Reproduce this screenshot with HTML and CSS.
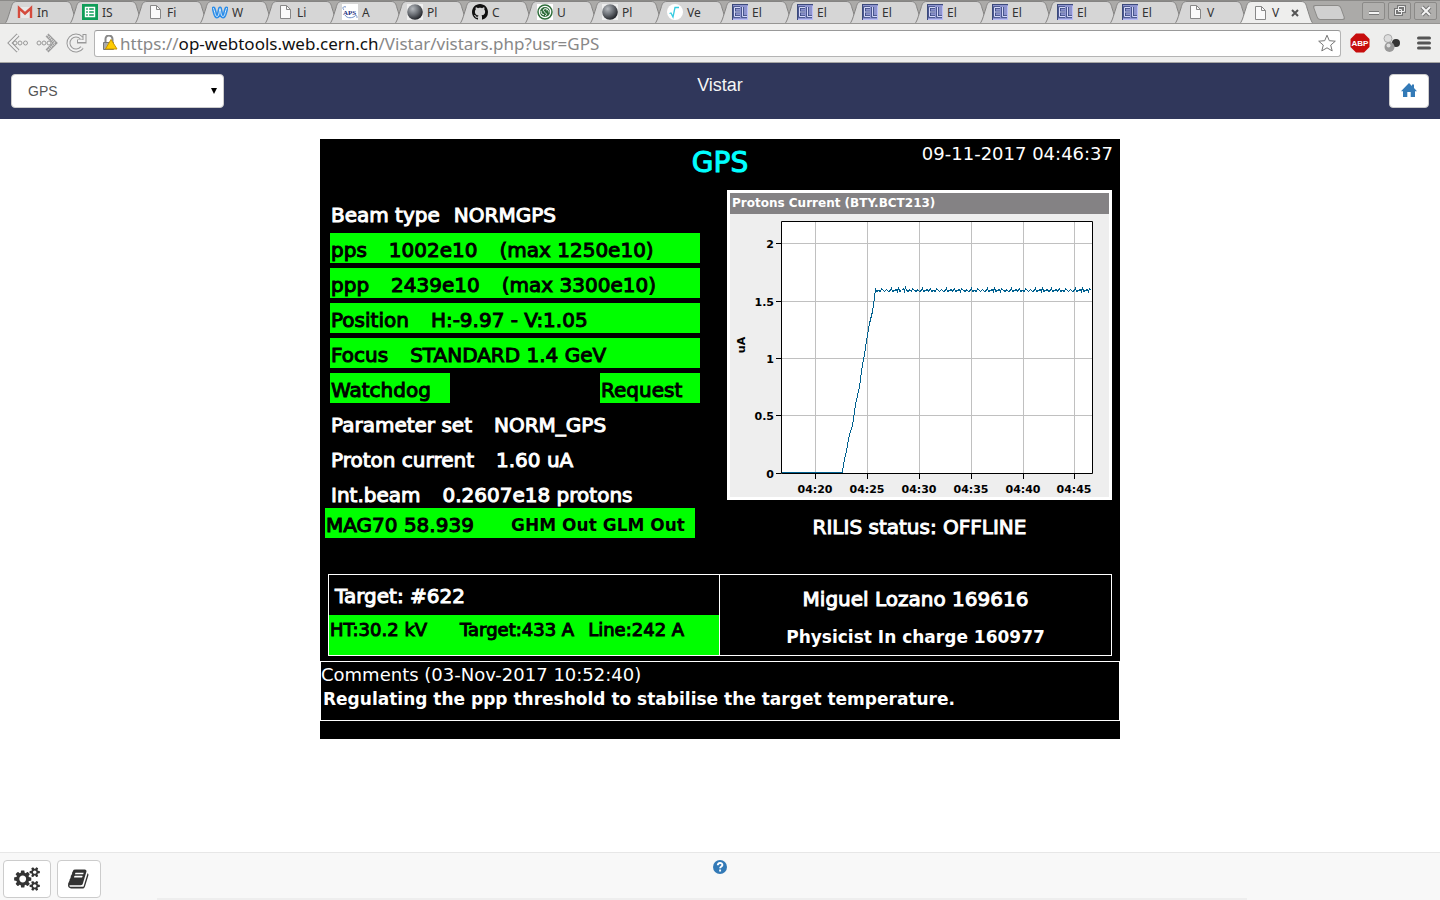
FILE: index.html
```html
<!DOCTYPE html>
<html lang="en">
<head>
    <meta charset="UTF-8">
    <meta name="viewport" content="width=device-width, initial-scale=1.0">
    <title>Vistar</title>
    <link rel="stylesheet" href="styles.css">
</head>
<body>
    <!-- shared icons -->
    <svg class="defs" aria-hidden="true">
        <symbol id="page" viewBox="0 0 16 16">
            <path d="M3.500 1.500h6l4 4v9h-10z" fill="#fafafa" stroke="#888"/>
            <path d="M9.500 1.500v4h4" fill="none" stroke="#888"/>
        </symbol>
        <symbol id="moon" viewBox="0 0 16 16">
            <radialGradient id="moonFill" cx="0.35" cy="0.3" r="0.75">
                <stop offset="0" stop-color="#b5b9be"/>
                <stop offset="0.500" stop-color="#6c7076"/>
                <stop offset="1" stop-color="#1d1f24"/>
            </radialGradient>
            <path d="M0 0h16v16H0z" fill="#eee"/>
            <circle cx="8" cy="8" r="7.800" fill="url(#moonFill)"/>
        </symbol>
        <symbol id="elog" viewBox="0 0 16 16">
            <path d="M0 0h16v16H0z" fill="#8e94cf"/>
            <path d="M0 16V0h16v1H1v15z" fill="#3c4a7c"/>
            <path d="M1 15h14V2h1v14H1z" fill="#b9bdf5"/>
            <path d="M8 3.500H2.500v9H8M2.500 8H8M10.500 3v9.500H15" fill="none" stroke="#39487f" stroke-width="2.600"/>
            <path d="M8 3.500H2.500v9H8M2.500 8H8M10.500 3v9.500H15" fill="none" stroke="#d5d8f8"/>
        </symbol>
    </svg>

    <nav class="tab-strip">
        <a class="tab" href="#"><svg viewBox="0 0 16 16"><path d="M1 3h14v11H1z" fill="#e8e8e8"/><path d="M2 14V4l6 5.500L14 4v10" fill="none" stroke="#d54b3d" stroke-width="2.400"/></svg><span>In</span></a>
        <a class="tab" href="#"><svg viewBox="0 0 16 16"><path d="M0 0h16v16H0z" fill="#0f9d58"/><path d="M3.500 3.500h9v9h-9zM3.500 6.500h9M3.500 9.500h9M6.500 3.500v9" fill="none" stroke="#fff" stroke-width="1.400"/></svg><span>IS</span></a>
        <a class="tab" href="#"><svg><use href="#page"/></svg><span>Fi</span></a>
        <a class="tab" href="#"><svg viewBox="0 0 16 16"><path d="M1.500 4.500c1.500 3 1.500 8 3.500 8s2-4 3-8c1 4 1 8 3 8s2-5 3.500-8" fill="none" stroke="#2e8ee8" stroke-width="4" stroke-linecap="round" stroke-linejoin="round"/><path d="M1.500 4.500c1.500 3 1.500 8 3.500 8s2-4 3-8c1 4 1 8 3 8s2-5 3.500-8" fill="none" stroke="#d8ebfb" stroke-linecap="round"/></svg><span>W</span></a>
        <a class="tab" href="#"><svg><use href="#page"/></svg><span>Li</span></a>
        <a class="tab" href="#"><svg viewBox="0 0 16 16"><path d="M0 0h16v16H0z" fill="#fff"/><path d="M4 3C1 2 0 4 2 6M3 11c2 4 8 3 10 1s2 1 2 2" fill="none" stroke="#7090c8"/><text x="1" y="11" class="aps">APS</text></svg><span>A</span></a>
        <a class="tab" href="#"><svg><use href="#moon"/></svg><span>Pl</span></a>
        <a class="tab" href="#"><svg viewBox="0 0 16 16"><path fill="#111" d="M8 0C3.580 0 0 3.580 0 8c0 3.540 2.290 6.530 5.470 7.590.4.070.55-.17.55-.38 0-.19-.01-.82-.01-1.490-2.010.37-2.530-.49-2.690-.94-.09-.23-.48-.94-.82-1.130-.28-.15-.68-.52-.01-.53.63-.01 1.080.58 1.230.82.72 1.210 1.870.87 2.330.66.07-.52.28-.87.51-1.070-1.780-.2-3.640-.89-3.640-3.950 0-.87.31-1.590.82-2.150-.08-.2-.36-1.020.08-2.120 0 0 .67-.21 2.200.82.64-.18 1.320-.27 2-.27s1.360.09 2 .27c1.530-1.040 2.200-.82 2.200-.82.44 1.100.16 1.920.08 2.120.51.56.82 1.270.82 2.150 0 3.070-1.870 3.750-3.650 3.950.29.25.54.73.54 1.480 0 1.070-.01 1.930-.01 2.200 0 .21.15.46.55.38A8 8 0 0 0 16 8c0-4.420-3.580-8-8-8z"/></svg><span>C</span></a>
        <a class="tab" href="#"><svg viewBox="0 0 16 16"><path d="M0 0h16v16H0z" fill="#fff"/><circle cx="8" cy="8" r="7" fill="#fff" stroke="#2f6e3b" stroke-width="1.500"/><circle cx="8" cy="8" r="5" fill="#2f6e3b"/><path d="M11 5.500C8 3.500 5 5.500 7 7.500s4 3 1 4.500M4 7c0 3 2 4 3 3.500M12 8.500c0-3-2-3-3-2.500" fill="none" stroke="#fff"/></svg><span>U</span></a>
        <a class="tab" href="#"><svg><use href="#moon"/></svg><span>Pl</span></a>
        <a class="tab" href="#"><svg viewBox="0 0 16 16"><circle cx="8" cy="8" r="8" fill="#fff"/><path d="M2.500 9.500L4 9l2 4 2-9.500h4" fill="none" stroke="#35cbe0" stroke-width="1.300"/></svg><span>Ve</span></a>
        <a class="tab" href="#"><svg><use href="#elog"/></svg><span>El</span></a>
        <a class="tab" href="#"><svg><use href="#elog"/></svg><span>El</span></a>
        <a class="tab" href="#"><svg><use href="#elog"/></svg><span>El</span></a>
        <a class="tab" href="#"><svg><use href="#elog"/></svg><span>El</span></a>
        <a class="tab" href="#"><svg><use href="#elog"/></svg><span>El</span></a>
        <a class="tab" href="#"><svg><use href="#elog"/></svg><span>El</span></a>
        <a class="tab" href="#"><svg><use href="#elog"/></svg><span>El</span></a>
        <a class="tab" href="#"><svg><use href="#page"/></svg><span>V</span></a>
        <a class="tab active" href="#"><svg><use href="#page"/></svg><span>V</span><svg class="close" viewBox="0 0 8 8"><path d="M1 1l6 6M7 1L1 7" stroke="#555" stroke-width="2"/></svg></a>
        <button class="new-tab" aria-label="New tab"></button>
        <div class="window-buttons">
            <button aria-label="Minimize"><svg viewBox="0 0 16 16"><path d="M3 10h10" stroke="#777" stroke-width="4"/><path d="M3 10h10" stroke="#f4f4f4" stroke-width="2"/></svg></button>
            <button aria-label="Restore"><svg viewBox="0 0 16 16"><g fill="none"><path d="M6.500 3.500h6v5h-6zM3.500 6.500h6v5h-6z" stroke="#777" stroke-width="3"/><path d="M6.500 3.500h6v5h-6zM3.500 6.500h6v5h-6z" stroke="#eee"/></g></svg></button>
            <button aria-label="Close"><svg viewBox="0 0 16 16"><path d="M4 4l8 8M12 4l-8 8" stroke="#777" stroke-width="4"/><path d="M4 4l8 8M12 4l-8 8" stroke="#f4f4f4" stroke-width="2"/></svg></button>
        </div>
    </nav>

    <div class="toolbar">
        <button aria-label="Back"><svg viewBox="0 0 22 22"><g fill="none"><path d="M11 3l-8 8 8 8" stroke="#999" stroke-width="4"/><path d="M11 3l-8 8 8 8" stroke="#f2f2f2" stroke-width="2"/><circle cx="13" cy="11" r="2" stroke="#999"/><circle cx="18.500" cy="11" r="2" stroke="#999"/><circle cx="8" cy="11" r="2" stroke="#999"/></g></svg></button>
        <button aria-label="Forward"><svg viewBox="0 0 22 22"><g fill="none"><path d="M11 3l8 8-8 8" stroke="#999" stroke-width="4"/><path d="M11 3l8 8-8 8" stroke="#ddd" stroke-width="2" stroke-dasharray="1 1"/><circle cx="3" cy="11" r="2" stroke="#999"/><circle cx="8" cy="11" r="2" stroke="#999"/><circle cx="13" cy="11" r="2" stroke="#999"/></g></svg></button>
        <button aria-label="Reload"><svg viewBox="0 0 22 22"><g fill="none"><path d="M17 15.500A7.500 7.500 0 1 1 16.500 6M19.500 2v7.500H12" stroke="#999" stroke-width="4"/><path d="M17 15.500A7.500 7.500 0 1 1 16.500 6M19.500 3v6H13" stroke="#f2f2f2" stroke-width="2"/></g></svg></button>
        <div class="address">
            <svg viewBox="0 0 16 16"><path d="M3.500 8V4a3 3 0 0 1 7 0v4" fill="none" stroke="#888" stroke-width="2"/><path d="M1.500 7.500h10v7h-10z" fill="#aaa" stroke="#777"/><path d="M9 4.500l6 9.500H3.500z" fill="#fc0" stroke="#c89600"/></svg>
            <span class="url">https://<b>op-webtools.web.cern.ch</b>/Vistar/vistars.php?usr=GPS</span>
            <svg class="star" viewBox="0 0 18 18"><path d="M9 1.200l2.300 5.500 6 .5-4.600 3.900 1.500 5.800L9 13.800l-5.200 3.100 1.500-5.800L.7 7.200l6-.5z" fill="#fff" stroke="#777"/></svg>
        </div>
        <div class="extensions">
            <button aria-label="AdBlock Plus"><svg viewBox="0 0 20 20"><path d="M6 .5h8L19.500 6v8L14 19.500H6L.5 14V6z" fill="#c70d0d"/><text x="10" y="13" text-anchor="middle" class="abp">ABP</text></svg></button>
            <button aria-label="Extension"><svg viewBox="0 0 20 20"><circle cx="14" cy="10" r="4" fill="#333"/><circle cx="6" cy="5.500" r="4" fill="#ddd" stroke="#aaa"/><circle cx="7.500" cy="14" r="5" fill="#999"/><circle cx="6.500" cy="12.500" r="2" fill="#ddd"/></svg></button>
            <button aria-label="Menu"><svg viewBox="0 0 20 20"><path d="M4.500 5h11M4.500 10h11M4.500 15h11" stroke="#555" stroke-width="3" stroke-linecap="round"/></svg></button>
        </div>
    </div>

    <header class="navbar">
        <select class="form-control" aria-label="Vistar page">
            <option>GPS</option>
        </select>
        <h1>Vistar</h1>
        <a class="home" href="#" aria-label="Home"><svg viewBox="0 0 16 16"><path d="M8 0l3 3V1.500h2V5l3 3.200h-2V14H9.700V9H6.300v5H2V8.200H0z" fill="#337ab7"/></svg></a>
    </header>

    <main class="vistar">
        <div class="top">
            <h2>GPS</h2>
            <time>09-11-2017 04:46:37</time>
        </div>
        <div class="columns">
            <section class="readings">
                <div class="row beam"><span>Beam type</span><span>NORMGPS</span></div>
                <div class="row ok"><span>pps</span><span>1002e10</span><span>(max 1250e10)</span></div>
                <div class="row ok"><span>ppp</span><span>2439e10</span><span>(max 3300e10)</span></div>
                <div class="row ok"><span>Position</span><span>H:-9.97 - V:1.05</span></div>
                <div class="row ok"><span>Focus</span><span>STANDARD 1.4 GeV</span></div>
                <div class="pair">
                    <div class="row ok watchdog">Watchdog</div>
                    <div class="row ok request">Request</div>
                </div>
                <div class="row"><span>Parameter set</span><span>NORM_GPS</span></div>
                <div class="row"><span>Proton current</span><span>1.60 uA</span></div>
                <div class="row"><span>Int.beam</span><span>0.2607e18 protons</span></div>
                <div class="row ok mag"><span>MAG70 58.939</span><span class="small">GHM Out GLM Out</span></div>
            </section>
            <section class="side">
                <div class="chart">
                    <h3>Protons Current (BTY.BCT213)</h3>
                    <svg viewBox="0 0 379 283">
                        <path d="M51.500 7.500h311v252h-311z" fill="#fff"/>
                        <path d="M85.500 8v251M137.500 8v251M189.500 8v251M241.500 8v251M293.500 8v251M344.500 8v251M52 29.500h310M52 87.500h310M52 144.500h310M52 201.500h310" stroke="#c0c0c0"/>
                        <path d="M51.500 7.500h311v252h-311zM46 29.500h5M46 87.500h5M46 144.500h5M46 201.500h5M46 259.500h5M85.500 260v5M137.500 260v5M189.500 260v5M241.500 260v5M293.500 260v5M344.500 260v5" fill="none" stroke="#000"/>
                        <path class="current" d="M52 258.500H112.500l1-8 3-14 3-16 3-9 3-21 4-18 3-22 2-10 2-14 3-17 3-12 2-14 1-8
                            l1 2 2-1 2 1 1-3 2 2 1 1 2-2 2 2 2-1 1-2 1 3 2-1 2-1 1 2 1-4 1 4 2-1 2-2 1 3 1-4 1 3 2 1 1-2 2 2 1-3 2 2 2 1 1-2 2 2
                            2-1 1-2 1 3 2-1 2-1 1 2 2-3 1 3 2-1 2 1 1-3 2 2 1 1 2-2 2 2 2-1 1-2 1 3 2-1 2-1 1 2 2-3 1 3 2-1 2-1 1 2 1-3 2 2 2 1 1-2 2 2
                            2-1 1-2 1 3 2-1 2 1 1-3 2 2 1 1 2-2 2 2 2-1 1-2 1 3 2-1 2-1 1 2 1-4 1 4 2-1 2-1 1 2 1-3 2 2 2 1 1-2 2 2
                            2-1 1-2 1 3 2-1 2-1 1 2 2-3 1 3 2-1 2 1 1-3 2 2 1 1 2-2 2 2 2-1 1-2 1 3 2-1 2-1 1 2 1-4 1 4 2-1 2-1 1 2
                            2-1 1-2 1 3 2-1 2-1 1 2 2-3 1 3 2-1 2 1 1-3 2 2 1 1 2-2 2 2 2-1 1-2 1 3 2-1 2-1 1 2 1-4 1 4 2-1 2-1 1 2 1-3 2 2"/>
                        <g text-anchor="end">
                            <text x="44" y="34">2</text>
                            <text x="44" y="92">1.5</text>
                            <text x="44" y="149">1</text>
                            <text x="44" y="206">0.5</text>
                            <text x="44" y="264">0</text>
                        </g>
                        <g text-anchor="middle">
                            <text x="85" y="279">04:20</text>
                            <text x="137" y="279">04:25</text>
                            <text x="189" y="279">04:30</text>
                            <text x="241" y="279">04:35</text>
                            <text x="293" y="279">04:40</text>
                            <text x="344" y="279">04:45</text>
                            <text transform="translate(15 131) rotate(-90)">uA</text>
                        </g>
                    </svg>
                </div>
                <p class="rilis">RILIS status: OFFLINE</p>
            </section>
        </div>
        <div class="target-box">
            <div class="target">
                <p>Target: #622</p>
                <div class="supply"><span>HT:30.2 kV</span><span>Target:433 A</span><span>Line:242 A</span></div>
            </div>
            <div class="people">
                <p>Miguel Lozano 169616</p>
                <p class="small">Physicist In charge 160977</p>
            </div>
        </div>
        <div class="comments">
            <p class="stamp">Comments (03-Nov-2017 10:52:40)</p>
            <p class="small">Regulating the ppp threshold to stabilise the target temperature.</p>
        </div>
    </main>

    <footer>
        <div class="tools">
            <button aria-label="Settings"><svg viewBox="0 0 1920 1792"><path d="M896 896q0-106-75-181t-181-75-181 75-75 181 75 181 181 75 181-75 75-181zm768 512q0-52-38-90t-90-38-90 38-38 90q0 53 37.500 90.500t90.500 37.500 90.500-37.500 37.500-90.500zm0-1024q0-52-38-90t-90-38-90 38-38 90q0 53 37.500 90.500t90.500 37.500 90.500-37.500 37.500-90.500zm-384 421v185q0 10-7 19.500t-16 10.500l-155 24q-11 35-32 76 34 48 90 115 7 11 7 20 0 12-7 19-23 30-82.500 89.500t-78.500 59.500q-11 0-21-7l-115-90q-37 19-77 31-11 108-23 155-7 24-30 24h-186q-11 0-20-7.500t-10-17.500l-23-153q-34-10-75-31l-118 89q-7 7-20 7-11 0-21-8-144-133-144-160 0-9 7-19 10-14 41-53t47-61q-23-44-35-82l-152-24q-10-1-17-9.500t-7-19.500v-185q0-10 7-19.500t16-10.500l155-24q11-35 32-76-34-48-90-115-7-11-7-20 0-12 7-20 22-30 82-89t79-59q11 0 21 7l115 90q34-18 77-32 11-108 23-154 7-24 30-24h186q11 0 20 7.500t10 17.500l23 153q34 10 75 31l118-89q8-7 20-7 11 0 21 8 144 133 144 160 0 8-7 19-12 16-42 54t-45 60q23 48 34 82l152 23q10 2 17 10.500t7 19.500zm640 533v140q0 16-149 31-12 27-30 52 51 113 51 138 0 4-4 7-122 71-124 71-8 0-46-47t-52-68q-20 2-30 2t-30-2q-14 21-52 68t-46 47q-2 0-124-71-4-3-4-7 0-25 51-138-18-25-30-52-149-15-149-31v-140q0-16 149-31 13-29 30-52-51-113-51-138 0-4 4-7 4-2 35-20t59-34 30-16q8 0 46 46.500t52 67.500q20-2 30-2t30 2q51-71 92-112l6-2q4 0 124 70 4 3 4 7 0 25-51 138 17 23 30 52 149 15 149 31zm0-1024v140q0 16-149 31-12 27-30 52 51 113 51 138 0 4-4 7-122 71-124 71-8 0-46-47t-52-68q-20 2-30 2t-30-2q-14 21-52 68t-46 47q-2 0-124-71-4-3-4-7 0-25 51-138-18-25-30-52-149-15-149-31v-140q0-16 149-31 13-29 30-52-51-113-51-138 0-4 4-7 4-2 35-20t59-34 30-16q8 0 46 46.500t52 67.500q20-2 30-2t30 2q51-71 92-112l6-2q4 0 124 70 4 3 4 7 0 25-51 138 17 23 30 52 149 15 149 31z"/></svg></button>
            <button aria-label="Logbook"><svg class="book" viewBox="0 0 1792 1792"><path d="M1639 478q40 57 18 129l-275 906q-19 64-76.500 107.500t-122.500 43.500h-923q-77 0-148.500-53.500t-99.500-131.500q-24-67-2-127 0-4 3-27t4-37q1-8-3-21.500t-3-19.500q2-11 8-21t16.500-23.500 16.500-23.500q23-38 45-91.500t30-91.500q3-10 .5-30t-.5-28q3-11 17-28t17-23q21-36 42-92t25-90q1-9-2.500-32t.5-28q4-13 22-30.500t22-22.500q19-26 42.500-84.500t27.500-96.500q1-8-3-25.500t-2-26.500q2-8 9-18t18-23 17-21q8-12 16.500-30.500t15-35 16-36 19.500-32 26.500-23.500 36-11.500 47.500 5.500l-1 3q38-9 51-9h761q74 0 114 56t18 130l-274 906q-36 119-71.500 153.500t-128.500 34.500h-869q-27 0-38 15-11 16-1 43 24 70 144 70h923q29 0 56-15.500t35-41.500l300-987q7-22 5-57 38 15 59 43zm-1064 2q-4 13 2 22.500t20 9.500h608q13 0 25.500-9.500t16.500-22.500l21-64q4-13-2-22.500t-20-9.500h-608q-13 0-25.500 9.500t-16.500 22.500zm-83 256q-4 13 2 22.500t20 9.500h608q13 0 25.500-9.500t16.500-22.500l21-64q4-13-2-22.500t-20-9.500h-608q-13 0-25.500 9.500t-16.500 22.500z"/></svg></button>
        </div>
        <a class="help" href="#" aria-label="Help"><svg viewBox="0 0 14 14"><circle cx="7" cy="7" r="7" fill="#337ab7"/><path d="M4.800 5.300c0-3 4.600-3 4.600-.4 0 1.600-2.300 1.500-2.300 3.400M7.100 9.500v2" fill="none" stroke="#fff" stroke-width="1.900"/></svg></a>
        <div class="scroll-line"></div>
    </footer>
</body>
</html>
```
FILE: styles.css
```css
* {
    box-sizing: border-box;
}

body {
    margin: 0;
    min-height: 100vh;
    display: flex;
    flex-direction: column;
    background-color: #fff;
    font-family: "Liberation Sans", Arial, sans-serif;
}

h1, h2, h3, p {
    margin: 0;
    font-weight: inherit;
}

button {
    padding: 0;
    border: none;
    background: none;
    cursor: pointer;
}

svg {
    display: block;
    flex: none;
}

.defs {
    position: absolute;
    width: 0;
    height: 0;
}

/* browser tabs */
.tab-strip {
    display: flex;
    height: 24px;
    padding-left: 3px;
    overflow: hidden;
    background-color: #abaaa8;
    border-top: 1px solid #8b8a88;
    border-bottom: 1px solid #969593;
}

.tab {
    display: flex;
    align-items: center;
    flex: none;
    width: 77px;
    margin-right: -12px;
    padding-left: 14px;
    background: url("data:image/svg+xml,%3Csvg xmlns='http://www.w3.org/2000/svg' width='77' height='23'%3E%3Cpath d='M.5 23.500C4 22 5 16 8 7 9 3 10 .5 14 .5H63C67 .5 68 3 69 7 72 16 73 22 76.500 23.500' fill='%23d6d6d6' stroke='%23858483'/%3E%3C/svg%3E") no-repeat;
    color: #333;
    font: 12px "Noto Sans", sans-serif;
    text-decoration: none;
}

.tab svg {
    width: 16px;
    height: 16px;
}

.tab span {
    width: 15px;
    margin-left: 4px;
    white-space: nowrap;
}

.tab.active {
    z-index: 1;
    height: 23px;
    background-image: url("data:image/svg+xml,%3Csvg xmlns='http://www.w3.org/2000/svg' width='77' height='23'%3E%3Cpath d='M.5 23.500C4 22 5 16 8 7 9 3 10 .5 14 .5H63C67 .5 68 3 69 7 72 16 73 22 76.500 23.500' fill='%23eeeeed' stroke='%23858483'/%3E%3C/svg%3E");
}

.tab .close {
    width: 8px;
    height: 8px;
    margin-left: 4px;
}

.new-tab {
    width: 28px;
    height: 15px;
    margin: 4px 0 0 12px;
    background-color: #d0d0d0;
    border: 1px solid #8b8a88;
    border-radius: 3px;
    transform: skewX(20deg);
}

.window-buttons {
    display: flex;
    gap: 3px;
    margin: 1px 3px 0 auto;
}

.window-buttons button {
    display: flex;
    justify-content: center;
    align-items: center;
    width: 23px;
    height: 18px;
    border: 1px solid #8b8a88;
    border-radius: 2px;
    background-color: #b0afad;
}

.window-buttons svg {
    width: 16px;
    height: 16px;
}

/* address bar */
.toolbar {
    display: flex;
    align-items: center;
    gap: 7px;
    height: 39px;
    padding: 0 6px 0 7px;
    background-color: #eeeeed;
    border-bottom: 1px solid #a5a5a3;
}

.toolbar button svg {
    width: 22px;
    height: 22px;
}

.address {
    display: flex;
    flex: 1;
    align-items: center;
    gap: 2px;
    height: 27px;
    padding: 0 4px 0 7px;
    background-color: #fff;
    border: 1px solid #b4b4b4;
    border-top-color: #999;
    border-radius: 3px;
}

.address svg {
    width: 16px;
    height: 16px;
}

.url {
    flex: 1;
    color: #888;
    font: 17px "Noto Sans", sans-serif;
}

.url b {
    color: #111;
    font-weight: 400;
}

.address .star {
    width: 18px;
    height: 18px;
}

.extensions {
    display: flex;
    gap: 12px;
    margin-left: 2px;
}

.extensions button svg {
    width: 20px;
    height: 20px;
}

.aps {
    fill: #1c2f80;
    font: bold 7px "Liberation Serif", serif;
}

.abp {
    fill: #fff;
    font: bold 8px "Liberation Sans", sans-serif;
}

/* page header */
.navbar {
    display: grid;
    grid-template-columns: 1fr auto 1fr;
    height: 56px;
    padding: 11px;
    background-color: #30375b;
}

.form-control {
    appearance: none;
    width: 213px;
    height: 34px;
    padding: 0 16px;
    color: #555;
    font: 14px "Liberation Sans", Arial, sans-serif;
    background: #fff url("data:image/svg+xml,%3Csvg xmlns='http://www.w3.org/2000/svg' width='6' height='6'%3E%3Cpath d='M0 0h6L3 6z'/%3E%3C/svg%3E") no-repeat right 6px center;
    border: 1px solid #ccc;
    border-radius: 4px;
}

.navbar h1 {
    color: #f5f5f5;
    font-size: 18px;
    line-height: 22px;
}

.home {
    display: flex;
    justify-content: center;
    align-items: center;
    justify-self: end;
    width: 40px;
    height: 34px;
    background-color: #fff;
    border: 1px solid #ccc;
    border-radius: 4px;
}

.home svg {
    width: 16px;
    height: 16px;
}

/* status screen */
.vistar {
    width: 100%;
    max-width: 800px;
    margin: 20px auto;
    padding-bottom: 18px;
    background-color: #000;
    color: #fff;
    font: 20px/30px "DejaVu Sans", sans-serif;
    -webkit-text-stroke: 1px;
}

.top {
    display: grid;
    grid-template-columns: 1fr auto 1fr;
    height: 51px;
    padding: 0 7px;
}

.top h2 {
    grid-column: 2;
    color: #0ff;
    font-size: 28px;
    line-height: 48px;
}

.top time {
    justify-self: end;
    font-size: 18px;
    -webkit-text-stroke: 0;
}

.columns {
    display: flex;
    justify-content: space-between;
    padding: 0 8px 0 5px;
}

.readings {
    display: flex;
    flex-direction: column;
    gap: 5px;
    width: 375px;
    padding-top: 8px;
}

.row {
    display: flex;
    gap: 22px;
    height: 30px;
    margin-left: 5px;
    padding-left: 1px;
    line-height: 34px;
    white-space: nowrap;
}

.beam {
    gap: 14px;
}

.ok {
    background-color: #0f0;
    color: #000;
}

.pair {
    display: flex;
    justify-content: space-between;
}

.watchdog {
    width: 120px;
}

.request {
    width: 100px;
}

.row.mag {
    justify-content: space-between;
    margin: -5px 5px 0 0;
    padding-right: 10px;
}

.small {
    font-size: 17px;
    font-weight: 700;
    -webkit-text-stroke: 0;
}

.side {
    width: 385px;
}

.chart {
    border: 3px solid #fff;
    background-color: #eee;
    -webkit-text-stroke: 0;
}

.chart h3 {
    padding-left: 2px;
    background-color: #848284;
    font-size: 12px;
    font-weight: 700;
    line-height: 21px;
}

.chart svg {
    width: 100%;
}

.chart text {
    font: bold 11px "DejaVu Sans", sans-serif;
}

.current {
    fill: none;
    stroke: #00608f;
    shape-rendering: crispEdges;
}

.rilis {
    margin-top: 12px;
    text-align: center;
}

.target-box {
    display: grid;
    grid-template-columns: 1fr 1fr;
    margin: 32px 8px 5px;
    border: 1px solid #fff;
}

.target {
    border-right: 1px solid #fff;
}

.target p {
    padding: 6px 6px 4px;
}

.supply {
    display: flex;
    gap: 14px;
    height: 40px;
    background-color: #0f0;
    color: #000;
    font-size: 18px;
    padding-left: 1px;
}

.supply span:first-child {
    width: 116px;
}

.people {
    padding-top: 9px;
    text-align: center;
}

.people .small {
    padding-top: 8px;
}

.comments {
    height: 60px;
    border: 1px solid #fff;
    line-height: 25px;
}

.comments .stamp {
    font-size: 18px;
    -webkit-text-stroke: 0;
}

.comments .small {
    padding-left: 2px;
}

/* page footer */
footer {
    display: grid;
    grid-template-columns: 1fr auto 1fr;
    align-items: start;
    height: 48px;
    margin-top: auto;
    padding: 7px 3px 0;
    background-color: #f8f8f8;
    border-top: 1px solid #e7e7e7;
}

.tools {
    display: flex;
    gap: 6px;
}

.tools button {
    display: flex;
    justify-content: center;
    align-items: center;
    height: 38px;
    padding: 0 10px;
    background-color: #fff;
    border: 1px solid #ccc;
    border-radius: 4px;
}

.tools svg {
    width: 26px;
    height: 24px;
    fill: #333;
}

.tools .book {
    width: 22px;
    height: 24px;
}

.help svg {
    width: 14px;
    height: 14px;
}

.scroll-line {
    grid-column: 1 / -1;
    width: 76%;
    height: 3px;
    margin-left: 154px;
    background-color: #eee;
}
```
